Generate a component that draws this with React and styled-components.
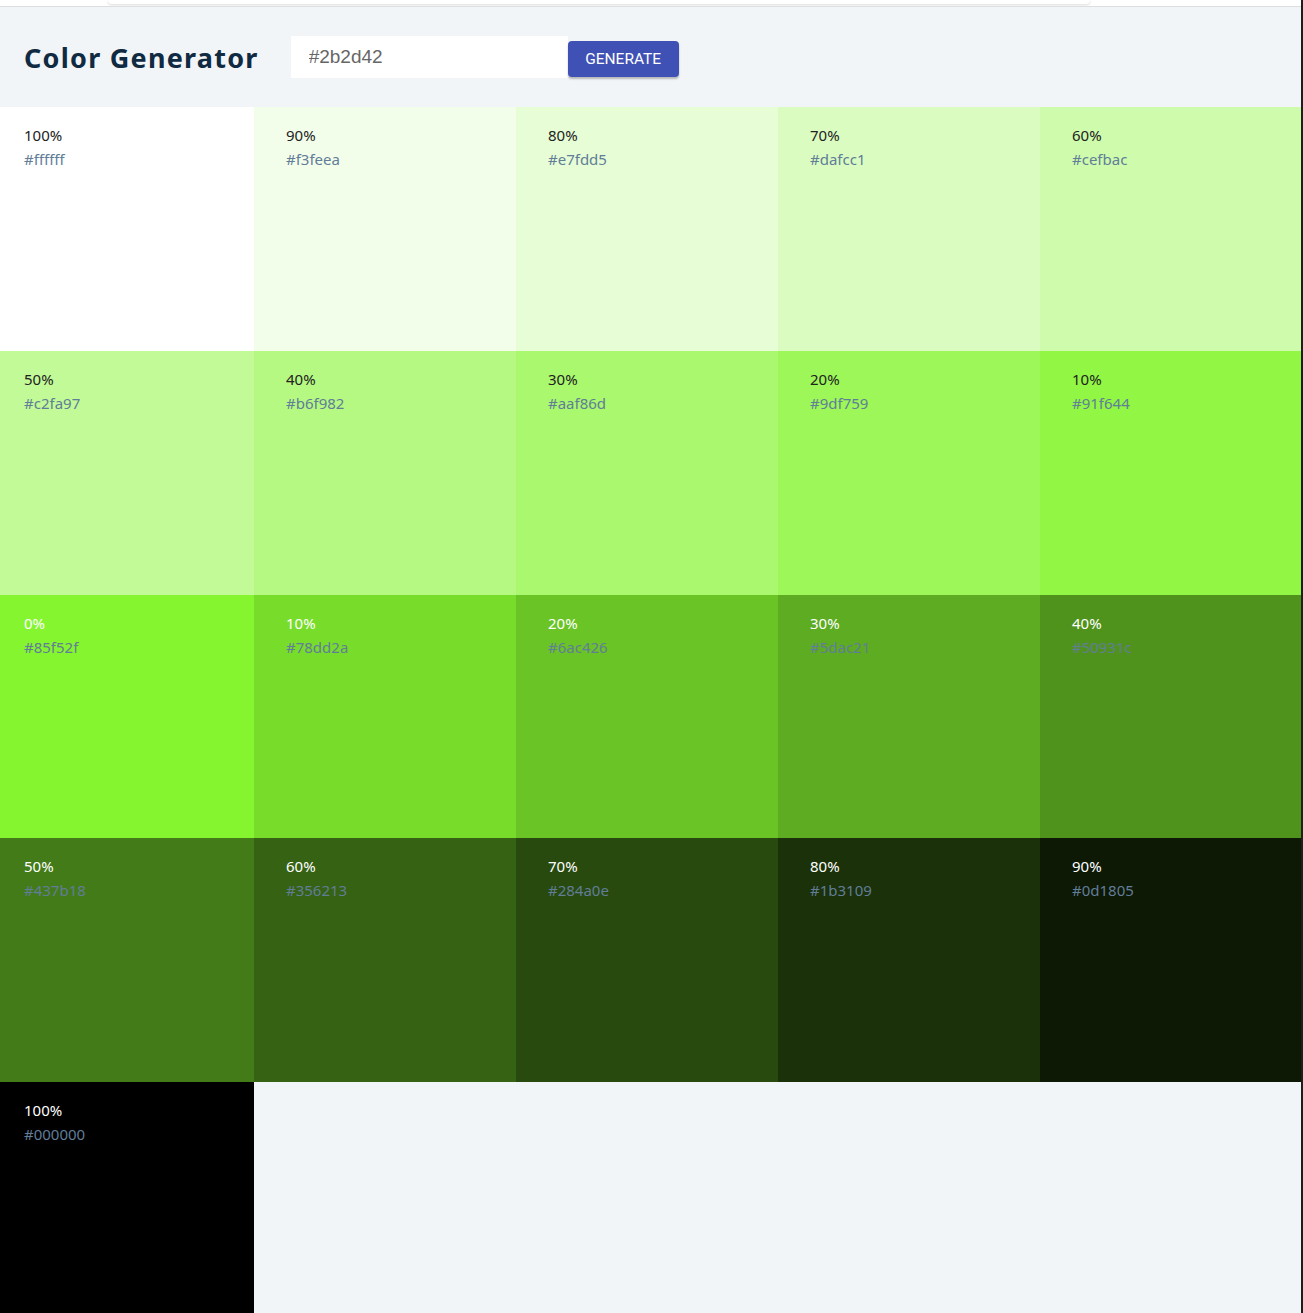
import styled, { createGlobalStyle } from 'styled-components';
import { useState } from 'react';

const GlobalStyle = createGlobalStyle`
  body {
    margin: 0;
    background: #f1f5f8;
    font-family: "Noto Sans", "Open Sans", sans-serif;
  }
`;

const tints = ['#ffffff', '#f3feea', '#e7fdd5', '#dafcc1', '#cefbac', '#c2fa97', '#b6f982', '#aaf86d', '#9df759', '#91f644'];
const shades = ['#78dd2a', '#6ac426', '#5dac21', '#50931c', '#437b18', '#356213', '#284a0e', '#1b3109', '#0d1805', '#000000'];

const colors = [
  ...tints.map((hex, i) => ({ hex, weight: (10 - i) * 10, light: true })),
  { hex: '#85f52f', weight: 0, light: false },
  ...shades.map((hex, i) => ({ hex, weight: (i + 1) * 10, light: false })),
];

const App = () => {
  const [color, setColor] = useState('');

  const submitHandler = (e) => {
    e.preventDefault();
  };

  return (
    <>
      <GlobalStyle />
      <Page>
        <TopStrip>
          <StripCard />
        </TopStrip>
        <Header>
          <Title>Color Generator</Title>
          <Form onSubmit={submitHandler}>
            <input type="text" value={color} onChange={(e) => setColor(e.target.value)} placeholder="#2b2d42" />
            <button type="submit">Generate</button>
          </Form>
        </Header>
        <ColorsWrap>
          <Colors>
            {colors.map((c, index) => (
              <Swatch key={index} $bg={c.hex} $light={c.light}>
                <p className="percent">{c.weight}%</p>
                <p className="hex">{c.hex}</p>
              </Swatch>
            ))}
          </Colors>
        </ColorsWrap>
      </Page>
    </>
  );
};

const Page = styled.div`
  width: 1301px;
  min-height: 100vh;
  border-right: 2px solid #1c1f1c;
  background: #f1f5f8;
`;

const TopStrip = styled.div`
  height: 6px;
  background: #ffffff;
  border-bottom: 1px solid #dcdfe2;
  overflow: hidden;
  padding-left: 108px;
`;

const StripCard = styled.div`
  width: 982px;
  height: 4px;
  background: #ffffff;
  border-radius: 0 0 6px 6px;
  box-shadow: 0 1px 3px rgba(0, 0, 0, 0.15);
`;

const Header = styled.section`
  height: 100px;
  display: flex;
  align-items: center;
  padding: 0 24px;
  gap: 32px;
`;

const Title = styled.h3`
  margin: 0;
  font-family: "Noto Sans", sans-serif;
  font-size: 27px;
  font-weight: 700;
  letter-spacing: 1.25px;
  color: #102a42;
`;

const Form = styled.form`
  display: flex;
  align-items: flex-start;
  input {
    width: 277px;
    height: 42px;
    box-sizing: border-box;
    border: none;
    outline: none;
    background: #ffffff;
    padding: 0 18px;
    font-family: "Liberation Sans", Arial, sans-serif;
    font-size: 19px;
    color: #333;
  }
  input::placeholder {
    color: #666;
  }
  button {
    margin-top: 5px;
    width: 111px;
    height: 36px;
    border: none;
    border-radius: 4px;
    background: #3f51b5;
    color: #ffffff;
    font-family: Roboto, "Liberation Sans", sans-serif;
    font-size: 15.5px;
    font-weight: 400;
    text-transform: uppercase;
    box-shadow: 0 2px 2px rgba(0, 0, 0, 0.25);
    cursor: pointer;
  }
`;

const ColorsWrap = styled.div`
  overflow: hidden;
`;

const Colors = styled.section`
  margin-left: -8px;
  width: 1310px;
  display: grid;
  grid-template-columns: repeat(5, 1fr);
  grid-auto-rows: 243.75px;
`;

const Swatch = styled.article`
  background: ${(p) => p.$bg};
  padding: 16px 32px;
  box-sizing: border-box;
  p {
    margin: 0;
    font-family: "Noto Sans", "Open Sans", sans-serif;
    font-size: 15px;
    line-height: 24px;
  }
  .percent {
    color: ${(p) => (p.$light ? '#222222' : '#ffffff')};
  }
  .hex {
    color: #617d98;
  }
`;

export default App;
